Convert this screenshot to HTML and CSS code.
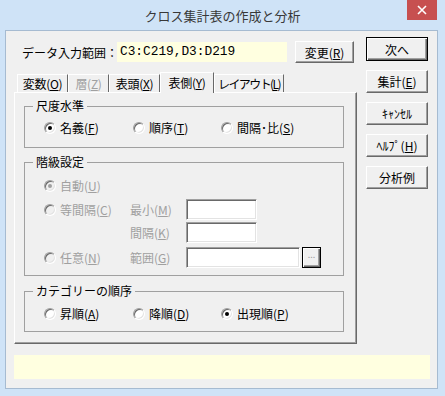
FILE: index.html
```html
<!DOCTYPE html>
<html lang="ja">
<head>
    <meta charset="UTF-8">
    <title>クロス集計表の作成と分析</title>
    <link rel="stylesheet" href="styles.css">
</head>
<body>
    <div class="window">
        <div class="titlebar">
            <span class="title">クロス集計表の作成と分析</span>
            <span class="close">
                <svg width="10" height="10" viewBox="0 0 10 10"><path d="M1 1 L9 9 M9 1 L1 9" stroke="#fff" stroke-width="1.6"/></svg>
            </span>
        </div>

        <div class="client">
            <div class="main">
                <div class="left">
                    <!-- data range -->
                    <div class="range-row">
                        <span class="range-label">データ入力範囲：</span>
                        <span class="range-value">C3:C219,D3:D219</span>
                        <button class="btn change"><span>変更(<u>R</u>)</span></button>
                    </div>

                    <!-- tabs -->
                    <div class="tabs">
                        <span class="tab t1"><span>変数(<u>O</u>)</span></span>
                        <span class="tab t2 disabled"><span>層(<u>Z</u>)</span></span>
                        <span class="tab t3"><span>表頭(<u>X</u>)</span></span>
                        <span class="tab t4 active"><span>表側(<u>Y</u>)</span></span>
                        <span class="tab t5"><span>レイアウト(<u>L</u>)</span></span>
                    </div>

                    <div class="panel">
                        <fieldset class="group scale">
                            <legend>尺度水準</legend>
                            <div class="choice-row">
                                <label class="radio"><span class="dot checked"></span><span>名義(<u>F</u>)</span></label>
                                <label class="radio"><span class="dot"></span><span>順序(<u>T</u>)</span></label>
                                <label class="radio"><span class="dot"></span><span>間隔･比(<u>S</u>)</span></label>
                            </div>
                        </fieldset>

                        <fieldset class="group classes">
                            <legend>階級設定</legend>
                            <div class="cls-row r1">
                                <label class="radio c1 disabled"><span class="dot checked"></span><span>自動(<u>U</u>)</span></label>
                            </div>
                            <div class="cls-row r2">
                                <label class="radio c1 disabled"><span class="dot"></span><span>等間隔(<u>C</u>)</span></label>
                                <span class="c2 disabled">最小(<u>M</u>)</span>
                                <span class="field"></span>
                            </div>
                            <div class="cls-row r3">
                                <span class="c1"></span>
                                <span class="c2 disabled">間隔(<u>K</u>)</span>
                                <span class="field"></span>
                            </div>
                            <div class="cls-row r4">
                                <label class="radio c1 disabled"><span class="dot"></span><span>任意(<u>N</u>)</span></label>
                                <span class="c2 disabled">範囲(<u>G</u>)</span>
                                <span class="field wide"></span>
                                <span class="dots-btn">...</span>
                            </div>
                        </fieldset>

                        <fieldset class="group order">
                            <legend>カテゴリーの順序</legend>
                            <div class="choice-row">
                                <label class="radio"><span class="dot"></span><span>昇順(<u>A</u>)</span></label>
                                <label class="radio"><span class="dot"></span><span>降順(<u>D</u>)</span></label>
                                <label class="radio"><span class="dot checked"></span><span>出現順(<u>P</u>)</span></label>
                            </div>
                        </fieldset>
                    </div>
                </div>

                <!-- command buttons -->
                <div class="side">
                    <button class="btn default"><span>次へ</span></button>
                    <button class="btn"><span>集計(<u>E</u>)</span></button>
                    <button class="btn"><span>ｷｬﾝｾﾙ</span></button>
                    <button class="btn"><span>ﾍﾙﾌﾟ(<u>H</u>)</span></button>
                    <button class="btn"><span>分析例</span></button>
                </div>
            </div>

            <div class="status"></div>
        </div>
    </div>
</body>
</html>
```

FILE: styles.css
```css
* {
    box-sizing: border-box;
}

body {
    margin: 0;
    font-family: "Noto Sans CJK JP", sans-serif;
    font-size: 12px;
    color: #000;
    background-color: #cfe3f7;
}

u {
    text-decoration: underline;
    text-underline-offset: 1px;
}

.window {
    height: 396px;
    display: flex;
    flex-direction: column;
}

/* title bar */
.titlebar {
    height: 30px;
    position: relative;
    display: flex;
    justify-content: center;
    align-items: center;
    font-size: 13px;
    color: #383838;
}

.close {
    position: absolute;
    top: 0;
    right: 8px;
    width: 30px;
    height: 20px;
    background-color: #c75050;
    display: flex;
    align-items: center;
    justify-content: center;
}

.client {
    flex: 1;
    margin: 0 7px 7px 5px;
    border: 1px solid #a6bbd1;
    background-color: #f0f0f0;
    display: flex;
    flex-direction: column;
}

.main {
    display: flex;
}

.left {
    margin-left: 8px;
    width: 343px;
}

/* data range row */
.range-row {
    margin-top: 10px;
    height: 22px;
    display: flex;
    align-items: center;
}

.range-label {
    width: 103px;
    padding-left: 8px;
    white-space: nowrap;
}

.range-value {
    width: 170px;
    height: 20px;
    line-height: 20px;
    padding-left: 3px;
    background-color: #ffffe0;
    font-family: "Liberation Mono", monospace;
    font-size: 12.8px;
}

/* buttons */
.btn {
    font: inherit;
    color: #000;
    padding: 0;
    background-color: #f0f0f0;
    border: 1px solid;
    border-color: #fff #696969 #696969 #fff;
    box-shadow: inset -1px -1px #a0a0a0;
    display: flex;
    align-items: center;
    justify-content: center;
    white-space: nowrap;
}

.btn.change {
    margin-left: 8px;
    width: 59px;
    height: 22px;
}

.btn.default {
    height: 24px;
    border: 1px solid #000;
    box-shadow: inset 1px 1px #fff, inset -1px -1px #696969, inset -2px -2px #a0a0a0;
}

.side {
    margin: 6px 0 0 9px;
    width: 62px;
    display: flex;
    flex-direction: column;
    gap: 9px;
}

.side .btn {
    height: 23px;
}

.side .btn.default {
    height: 24px;
}

/* tabs */
.tabs {
    margin-top: 9px;
    padding-left: 3px;
    height: 20px;
    display: flex;
    align-items: flex-end;
}

.tab {
    height: 18px;
    border: 1px solid;
    border-color: #fff #696969 transparent #fff;
    border-bottom: none;
    display: flex;
    align-items: center;
    justify-content: center;
    white-space: nowrap;
    letter-spacing: -0.3px;
}

.tab.t1 { width: 51px; }
.tab.t2 { width: 41px; }
.tab.t3 { width: 51px; }
.tab.t4 { width: 54px; }
.tab.t5 { width: 70px; letter-spacing: -1.6px; }

.tab.active {
    height: 21px;
    margin-bottom: -1px;
    position: relative;
    z-index: 1;
    background-color: #f0f0f0;
    padding-bottom: 2px;
}

.disabled {
    color: #a0a0a0;
}

.panel {
    height: 252px;
    border: 1px solid;
    border-color: #fff #696969 #696969 #fff;
    box-shadow: inset -1px -1px #a0a0a0;
    padding: 5px 0 0 9px;
}

/* group boxes */
.group {
    margin: 0;
    padding: 0;
    width: 320px;
    border: 1px solid #a0a0a0;
    min-inline-size: 0;
}

.group legend {
    margin-left: 8px;
    padding: 0 3px;
    line-height: 16px;
}

.classes {
    margin-top: 6px;
}

.order {
    margin-top: 7px;
}

.choice-row {
    margin-left: 19px;
    height: 16px;
    display: grid;
    grid-template-columns: 89px 88px auto;
}

.scale .choice-row {
    margin: 6px 0 11px 19px;
}

.order .choice-row {
    margin: 7px 0 9px 19px;
}

.radio {
    display: flex;
    align-items: center;
    gap: 4px;
    white-space: nowrap;
    line-height: 16px;
}

.dot {
    width: 12px;
    height: 12px;
    border-radius: 50%;
    border: 1px solid;
    border-color: #a0a0a0 #fff #fff #a0a0a0;
    box-shadow: inset 1px 1px #696969, inset -1px -1px #e3e3e3;
    background-color: #fff;
    display: flex;
    align-items: center;
    justify-content: center;
}

.dot.checked::after {
    content: "";
    width: 4px;
    height: 4px;
    border-radius: 50%;
    background-color: #000;
}

.disabled .dot {
    background-color: #f0f0f0;
}

.disabled .dot.checked::after {
    background-color: #a0a0a0;
}

/* class settings rows */
.cls-row {
    margin-left: 19px;
    display: flex;
    align-items: center;
    height: 21px;
}

.cls-row.r1 { height: 16px; margin-top: 8px; }
.cls-row.r2 { margin-top: 5px; }
.cls-row.r3 { margin-top: 2px; }
.cls-row.r4 { margin-top: 4px; margin-bottom: 7px; }

.c1 {
    width: 86px;
}

.c2 {
    width: 56px;
    white-space: nowrap;
}

.field {
    width: 71px;
    height: 21px;
    background-color: #fff;
    border: 1px solid;
    border-color: #a0a0a0 #fff #fff #a0a0a0;
    box-shadow: inset 1px 1px #696969, inset -1px -1px #e3e3e3;
}

.field.wide {
    width: 114px;
}

.dots-btn {
    margin-left: 2px;
    width: 19px;
    height: 21px;
    border: 1px solid #000;
    box-shadow: inset 1px 1px #fff, inset -1px -1px #696969, inset -2px -2px #a0a0a0;
    color: #a0a0a0;
    font-size: 9px;
    line-height: 14px;
    text-align: center;
}

/* status line */
.status {
    margin: 11px 0 0 8px;
    width: 416px;
    height: 24px;
    background-color: #ffffe0;
}
```
